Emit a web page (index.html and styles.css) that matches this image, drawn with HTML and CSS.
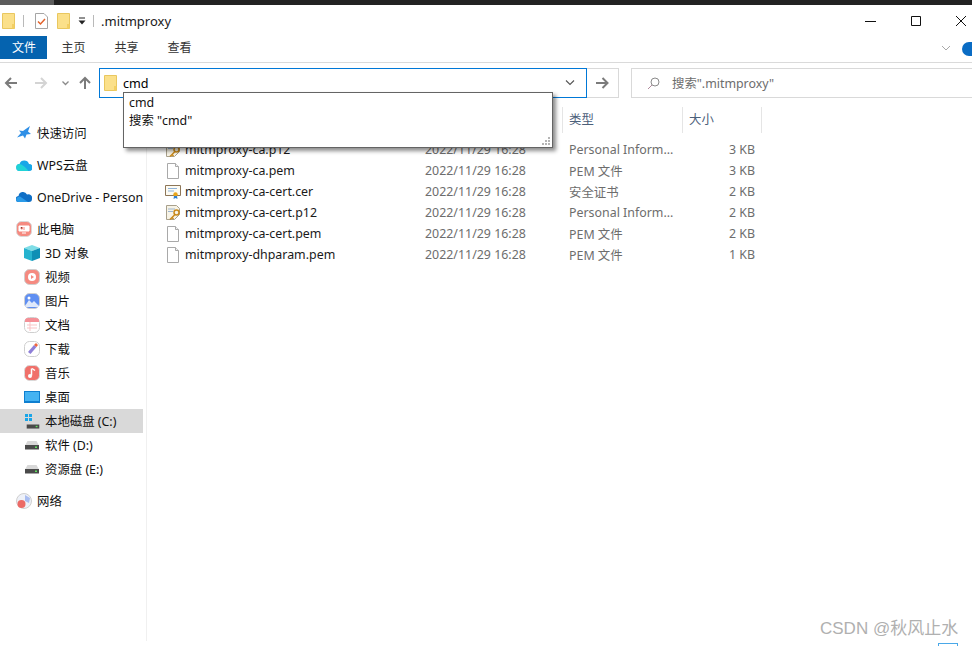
FILE: index.html
```html
<!DOCTYPE html>
<html lang="zh-CN">
<head>
    <meta charset="UTF-8">
    <meta name="viewport" content="width=device-width, initial-scale=1.0">
    <title>.mitmproxy</title>
    <link rel="stylesheet" href="styles.css">
</head>
<body>
    <svg class="defs" width="0" height="0">
        <symbol id="folder" viewBox="0 0 13 16">
            <path d="M.5.5h12v15H.5z" fill="#fbe08a" stroke="#e9c75f"/>
            <path d="M10 11h2.500v4.500H10z" fill="#f3cf63"/>
        </symbol>
        <symbol id="file" viewBox="0 0 14 16">
            <path d="M1.500.5h8l3 3v12h-11z" fill="#fff" stroke="#a9a9a9"/>
            <path d="M9.500.5v3h3" fill="#f2f2f2" stroke="#a9a9a9"/>
        </symbol>
        <symbol id="pfx" viewBox="0 0 16 16">
            <path d="M1.500.5h10l3 3v6l-5 5h-8z" fill="#f7f3e6" stroke="#a8a08c"/>
            <path d="M3 4h7M3 6.500h5" stroke="#9db5cf"/>
            <circle cx="11.500" cy="7.500" r="2.500" fill="none" stroke="#c98a1c" stroke-width="1.500"/>
            <path d="M10 9.500l-5 5M7 12.500l1.500 1.500" stroke="#c98a1c" stroke-width="1.500"/>
        </symbol>
        <symbol id="cert" viewBox="0 0 16 16">
            <path d="M.5 1.500h15v10H.5z" fill="#fdfbf3" stroke="#8d7658"/>
            <path d="M3 4.500h9M3 7h6" stroke="#8fb3d9"/>
            <circle cx="10.500" cy="10.500" r="2.200" fill="#e8a51c"/>
            <path d="M9 12l-.5 3 2-1 2 1-.5-3z" fill="#2e7fd0"/>
        </symbol>
        <symbol id="drive" viewBox="0 0 14 10">
            <path d="M2.500 1h9L14 5.500H0z" fill="#d8d8d8"/>
            <path d="M0 5h14v4.500H0z" fill="#4a4a4a"/>
            <path d="M10 6.500h2v1.500h-2z" fill="#5fe05f"/>
        </symbol>
    </svg>

    <div class="top-strip"><div class="top-strip-tab"></div></div>

    <header class="title-bar">
        <svg class="qa-icon" width="13" height="16"><use href="#folder"/></svg>
        <span class="qa-sep qa-sep-first"></span>
        <svg class="qa-check" width="13" height="16" viewBox="0 0 13 16">
            <path d="M.5.5h8.500l3.500 3.500v11.500H.5z" fill="#fff" stroke="#a5a5a5"/>
            <path d="M3 8.500l2.500 2.500 4.500-5" fill="none" stroke="#e2622b" stroke-width="1.500"/>
        </svg>
        <svg class="qa-icon qa-folder2" width="13" height="16"><use href="#folder"/></svg>
        <svg class="qa-drop" width="8" height="8" viewBox="0 0 8 8">
            <path d="M1 1h6" stroke="#222"/>
            <path d="M.5 3.500h7L4 7.500z" fill="#222"/>
        </svg>
        <span class="qa-sep"></span>
        <span class="window-title">.mitmproxy</span>
        <div class="window-controls">
            <svg width="12" height="12" viewBox="0 0 12 12"><path d="M0 6.500h11" stroke="#111"/></svg>
            <svg width="12" height="12" viewBox="0 0 12 12"><path d="M1.500 1.500h9v9h-9z" fill="none" stroke="#111"/></svg>
            <svg width="12" height="12" viewBox="0 0 12 12"><path d="M1 1l10 10M11 1L1 11" stroke="#111"/></svg>
        </div>
    </header>

    <nav class="ribbon">
        <span class="tab tab-file">文件</span>
        <span class="tab">主页</span>
        <span class="tab">共享</span>
        <span class="tab">查看</span>
        <svg class="ribbon-chevron" width="10" height="6" viewBox="0 0 10 6"><path d="M1 1l4 4 4-4" fill="none" stroke="#a9a9a9"/></svg>
        <span class="help-dot"></span>
    </nav>

    <div class="nav-bar">
        <svg class="nav-btn nav-back" width="14" height="14" viewBox="0 0 14 14"><path d="M13 7H2M7 2L2 7l5 5" fill="none" stroke="#7b7b7b" stroke-width="2"/></svg>
        <svg class="nav-btn nav-forward" width="14" height="14" viewBox="0 0 14 14"><path d="M1 7h11M7 2l5 5-5 5" fill="none" stroke="#d4d4d4" stroke-width="2"/></svg>
        <svg class="nav-btn nav-recent" width="7" height="5" viewBox="0 0 7 5"><path d="M.5 .5L3.500 3.500 6.500 .5" fill="none" stroke="#8a8a8a" stroke-width="1.300"/></svg>
        <svg class="nav-btn nav-up" width="14" height="14" viewBox="0 0 14 14"><path d="M7 13V2M2 7l5-5 5 5" fill="none" stroke="#7b7b7b" stroke-width="2"/></svg>
        <div class="address-box">
            <svg width="13" height="16"><use href="#folder"/></svg>
            <span class="address-text">cmd</span>
            <svg class="address-chevron" width="10" height="6" viewBox="0 0 10 6"><path d="M1 .5l4 4 4-4" fill="none" stroke="#555" stroke-width="1.100"/></svg>
        </div>
        <div class="go-btn">
            <svg width="13" height="12" viewBox="0 0 13 12"><path d="M0 6h11M6.500 1l5 5-5 5" fill="none" stroke="#7b7b7b" stroke-width="2"/></svg>
        </div>
        <div class="search-box">
            <svg width="13" height="13" viewBox="0 0 13 13"><circle cx="8" cy="5" r="4" fill="none" stroke="#8a8a8a"/><path d="M5 8l-4 4" stroke="#b08a9c"/></svg>
            <span class="search-text">搜索".mitmproxy"</span>
        </div>
    </div>

    <main class="main">
        <aside class="sidebar">
            <div class="tree-group">
                <div class="tree-item">
                    <svg class="tree-icon" viewBox="0 0 16 16"><path d="M14 1l-2 5.500 3 2.500-4.500.5-1.500 4-2-3-6 2 4-4.500L3 5.500l4 .5z" fill="#2f8fe6"/></svg>
                    快速访问
                </div>
            </div>
            <div class="tree-group">
                <div class="tree-item">
                    <svg class="tree-icon" viewBox="0 0 16 16"><path d="M4 14a3.500 3.500 0 0 1-.5-7A5 5 0 0 1 13 7a3.500 3.500 0 0 1 0 7z" fill="#18a7e8"/><path d="M4 14a3.500 3.500 0 0 1-.5-7c2 0 6 3 9 7z" fill="#21d3d6"/></svg>
                    WPS云盘
                </div>
            </div>
            <div class="tree-group">
                <div class="tree-item">
                    <svg class="tree-icon" viewBox="0 0 16 16"><path d="M3 13a3 3 0 0 1-.5-6A4.500 4.500 0 0 1 11 5.500 3.700 3.700 0 0 1 16 10c0 2-1 3-3 3z" fill="#0f6fc6"/><path d="M0 11c0-2 2-3.500 4-3.500l8 5.500H3c-2 0-3-1-3-2z" fill="#2b9be8"/></svg>
                    OneDrive - Person
                </div>
            </div>
            <div class="tree-group">
                <div class="tree-item">
                    <svg class="tree-icon" viewBox="0 0 16 16"><rect x=".5" y=".5" width="15" height="15" rx="5" fill="#f58a80" stroke="#d9d9d9"/><path d="M3 5h10v5H3zM6 12h4" fill="#fff" stroke="#fff"/><path d="M5 6v2h1.500V6M8 6v3" stroke="#f58a80"/></svg>
                    此电脑
                </div>
                <div class="tree-item tree-child">
                    <svg class="tree-icon" viewBox="0 0 16 16"><path d="M8 0l8 3-8 3-8-3z" fill="#7fdde6"/><path d="M0 3l8 3v10l-8-3z" fill="#26b3cf"/><path d="M16 3L8 6v10l8-3z" fill="#0e8fb5"/></svg>
                    3D 对象
                </div>
                <div class="tree-item tree-child">
                    <svg class="tree-icon" viewBox="0 0 16 16"><rect x=".5" y=".5" width="15" height="15" rx="5" fill="#f58a80" stroke="#cfcfcf"/><circle cx="8" cy="8" r="4" fill="#fff"/><path d="M7 6l3 2-3 2z" fill="#f58a80"/></svg>
                    视频
                </div>
                <div class="tree-item tree-child">
                    <svg class="tree-icon" viewBox="0 0 16 16"><rect x=".5" y=".5" width="15" height="15" rx="5" fill="#5f8ff2" stroke="#cfcfcf"/><path d="M1 13l4-6 3 3 2-2 5 5v1H2z" fill="#dfe9fb"/><circle cx="5" cy="5" r="1.500" fill="#fff"/></svg>
                    图片
                </div>
                <div class="tree-item tree-child">
                    <svg class="tree-icon" viewBox="0 0 16 16"><rect x=".5" y=".5" width="15" height="15" rx="5" fill="#fff" stroke="#cfcfcf"/><path d="M1 5V3.500Q1 1 4 1h8q3 0 3 2.500V5z" fill="#f58f96"/><path d="M3 8h10M3 11h10M6 5v9" stroke="#f9c3c5"/></svg>
                    文档
                </div>
                <div class="tree-item tree-child">
                    <svg class="tree-icon" viewBox="0 0 16 16"><rect x=".5" y=".5" width="15" height="15" rx="5" fill="#fff" stroke="#cfcfcf"/><path d="M4 11l6-7 2.500 2-6 7z" fill="#8e7fd8"/><path d="M10 4l2-2 2 2-1.500 2z" fill="#f0663f"/></svg>
                    下载
                </div>
                <div class="tree-item tree-child">
                    <svg class="tree-icon" viewBox="0 0 16 16"><rect x=".5" y=".5" width="15" height="15" rx="5" fill="#f0706a" stroke="#d9d9d9"/><path d="M7.500 3.500v7" stroke="#fff" stroke-width="1.500"/><circle cx="6" cy="11" r="2" fill="#fff"/><path d="M8 3.500l3 2" stroke="#fff" stroke-width="1.500"/></svg>
                    音乐
                </div>
                <div class="tree-item tree-child">
                    <svg class="tree-icon" viewBox="0 0 16 12"><path d="M0 0h16v12H0z" fill="#0e7fd0"/><path d="M1 1h14v9H1z" fill="#45b3f2"/></svg>
                    桌面
                </div>
                <div class="tree-item tree-child tree-selected">
                    <svg class="tree-icon" viewBox="0 0 16 16"><path d="M1 1h3v3H1zM5 1h3v3H5zM1 5h3v3H1zM5 5h3v3H5z" fill="#19a5e8"/><use href="#drive" x="2" y="7" width="14" height="9"/></svg>
                    本地磁盘 (C:)
                </div>
                <div class="tree-item tree-child">
                    <svg class="tree-icon tree-drive" viewBox="0 0 14 10"><use href="#drive"/></svg>
                    软件 (D:)
                </div>
                <div class="tree-item tree-child">
                    <svg class="tree-icon tree-drive" viewBox="0 0 14 10"><use href="#drive"/></svg>
                    资源盘 (E:)
                </div>
            </div>
            <div class="tree-group">
                <div class="tree-item">
                    <svg class="tree-icon" viewBox="0 0 16 16"><circle cx="8" cy="8" r="7.500" fill="#eef1f8" stroke="#cfcfcf"/><path d="M9 2l5 3-1 5-4-2z" fill="#a9bdf0"/><circle cx="5.500" cy="11" r="4" fill="#ec6a66"/></svg>
                    网络
                </div>
            </div>
        </aside>

        <section class="content">
            <div class="list-head">
                <div class="head-cell"></div>
                <div class="head-cell"></div>
                <div class="head-cell head-line">类型</div>
                <div class="head-cell head-line head-last">大小</div>
            </div>
            <div class="file-row">
                <div class="file-name"><svg width="16" height="16"><use href="#pfx"/></svg>mitmproxy-ca.p12</div>
                <div>2022/11/29 16:28</div><div>Personal Inform...</div><div class="file-size">3 KB</div>
            </div>
            <div class="file-row">
                <div class="file-name"><svg width="16" height="16"><use href="#file"/></svg>mitmproxy-ca.pem</div>
                <div>2022/11/29 16:28</div><div>PEM 文件</div><div class="file-size">3 KB</div>
            </div>
            <div class="file-row">
                <div class="file-name"><svg width="16" height="16"><use href="#cert"/></svg>mitmproxy-ca-cert.cer</div>
                <div>2022/11/29 16:28</div><div>安全证书</div><div class="file-size">2 KB</div>
            </div>
            <div class="file-row">
                <div class="file-name"><svg width="16" height="16"><use href="#pfx"/></svg>mitmproxy-ca-cert.p12</div>
                <div>2022/11/29 16:28</div><div>Personal Inform...</div><div class="file-size">2 KB</div>
            </div>
            <div class="file-row">
                <div class="file-name"><svg width="16" height="16"><use href="#file"/></svg>mitmproxy-ca-cert.pem</div>
                <div>2022/11/29 16:28</div><div>PEM 文件</div><div class="file-size">2 KB</div>
            </div>
            <div class="file-row">
                <div class="file-name"><svg width="16" height="16"><use href="#file"/></svg>mitmproxy-dhparam.pem</div>
                <div>2022/11/29 16:28</div><div>PEM 文件</div><div class="file-size">1 KB</div>
            </div>
        </section>
    </main>

    <div class="suggest">
        <div>cmd</div>
        <div>搜索 "cmd"</div>
        <svg class="suggest-grip" width="9" height="9" viewBox="0 0 9 9"><path d="M6 0h2v2H6zM3 3h2v2H3zM6 3h2v2H6zM0 6h2v2H0zM3 6h2v2H3zM6 6h2v2H6z" fill="#b5b5b5"/></svg>
    </div>

    <div class="watermark">CSDN @秋风止水</div>
    <div class="corner-box"></div>
</body>
</html>
```

FILE: styles.css
```css
* {
    box-sizing: border-box;
    margin: 0;
    padding: 0;
}

html, body {
    height: 100%;
    overflow: hidden;
}

body {
    position: relative;
    display: flex;
    flex-direction: column;
    background-color: #fff;
    color: #1a1a1a;
    font-family: "Noto Sans", "Noto Sans CJK SC", sans-serif;
    font-size: 12.4px;
}

svg {
    flex-shrink: 0;
    display: block;
}

.defs {
    position: absolute;
}

.top-strip {
    height: 5px;
    background-color: #222;
}

.top-strip-tab {
    width: 54px;
    height: 5px;
    background-color: #5c5c5c;
}

/* title bar */
.title-bar {
    display: flex;
    align-items: center;
    height: 31px;
    padding-left: 2px;
}

.qa-sep {
    width: 1px;
    height: 12px;
    margin: 0 7px 0 7px;
    background-color: #b9b9b9;
}

.qa-sep-first {
    margin-left: 8px;
    margin-right: 11px;
}

.qa-folder2 {
    margin-left: 9px;
}

.qa-drop {
    margin-left: 8px;
}

.window-title {
    font-size: 13px;
}

.window-controls {
    display: flex;
    gap: 33px;
    margin-left: auto;
    margin-right: 5px;
}

/* ribbon */
.ribbon {
    display: flex;
    align-items: flex-start;
    height: 27px;
    border-bottom: 1px solid #dadada;
}

.tab {
    width: 53px;
    height: 23px;
    line-height: 24px;
    font-size: 12px;
    text-align: center;
    color: #333;
}

.tab-file {
    width: 47px;
    padding-left: 1px;
    background-color: #0563af;
    color: #fff;
}

.ribbon-chevron {
    margin: 9px 0 0 auto;
}

.help-dot {
    width: 10px;
    height: 14px;
    margin: 6px 0 0 11px;
    border-radius: 7px 0 0 7px;
    background-color: #0a6cc4;
}

/* address row */
.nav-bar {
    display: flex;
    align-items: center;
    height: 36px;
    padding: 5px 0 1px 4px;
}

.nav-forward {
    margin-left: 16px;
}

.nav-recent {
    margin-left: 14px;
}

.nav-up {
    margin-left: 9px;
}

.address-box {
    display: flex;
    align-items: center;
    width: 488px;
    height: 30px;
    margin-left: 7px;
    padding-left: 4px;
    border: 1px solid #0078d7;
}

.address-text {
    margin-left: 6px;
    font-size: 12.6px;
    color: #000;
}

.address-chevron {
    margin-left: auto;
    margin-right: 11px;
}

.go-btn {
    display: flex;
    align-items: center;
    justify-content: center;
    width: 32px;
    height: 30px;
    border: 1px solid #d9d9d9;
    border-left: none;
}

.search-box {
    display: flex;
    flex: 1;
    align-items: center;
    height: 30px;
    margin-left: 12px;
    padding-left: 15px;
    border: 1px solid #d9d9d9;
    border-right: none;
    color: #6d6d6d;
}

.search-text {
    margin-left: 12px;
}

/* left tree */
.main {
    display: flex;
    flex: 1;
    min-height: 0;
}

.sidebar {
    width: 147px;
    padding-top: 22px;
    margin-bottom: 5px;
    border-right: 1px solid #f0f0f0;
}

.tree-group {
    margin-bottom: 8px;
}

.tree-item {
    display: flex;
    align-items: center;
    gap: 5px;
    width: 143px;
    height: 24px;
    padding-left: 16px;
    white-space: nowrap;
    overflow: hidden;
    color: #111;
}

.tree-child {
    padding-left: 24px;
}

.tree-selected {
    background-color: #d9d9d9;
}

.tree-icon {
    width: 16px;
    height: 16px;
}

.tree-drive {
    height: 10px;
}

/* file list */
.content {
    flex: 1;
    padding-left: 18px;
}

.list-head {
    display: grid;
    grid-template-columns: 260px 137px 120px 80px;
    width: 597px;
    height: 40px;
    padding-top: 8px;
    color: #4c607a;
}

.head-cell {
    height: 26px;
    line-height: 25px;
    padding-left: 6px;
}

.head-line {
    border-left: 1px solid #e5e5e5;
}

.head-last {
    border-right: 1px solid #e5e5e5;
}

.file-row {
    display: grid;
    grid-template-columns: 260px 144px 120px 66px;
    align-items: center;
    width: 590px;
    height: 21px;
    color: #6d6d6d;
}

.file-name {
    display: flex;
    align-items: center;
    gap: 4px;
    color: #1a1a1a;
}

.file-size {
    text-align: right;
}

/* autocomplete dropdown over the address box */
.suggest {
    position: absolute;
    top: 92px;
    left: 123px;
    width: 430px;
    height: 56px;
    padding: 1px 5px;
    border: 1px solid #646464;
    background-color: #fff;
    box-shadow: 3px 3px 4px rgba(0, 0, 0, 0.45);
    color: #111;
    line-height: 18px;
}

.suggest-grip {
    position: absolute;
    right: 1px;
    bottom: 1px;
}

.watermark {
    position: absolute;
    top: 614px;
    left: 820px;
    font-family: "Liberation Sans", "Noto Sans CJK SC", sans-serif;
    font-size: 17px;
    color: #b0b0b0;
}

.corner-box {
    position: absolute;
    top: 643px;
    left: 938px;
    width: 20px;
    height: 10px;
    border: 1px solid #4aa8e8;
}
```
